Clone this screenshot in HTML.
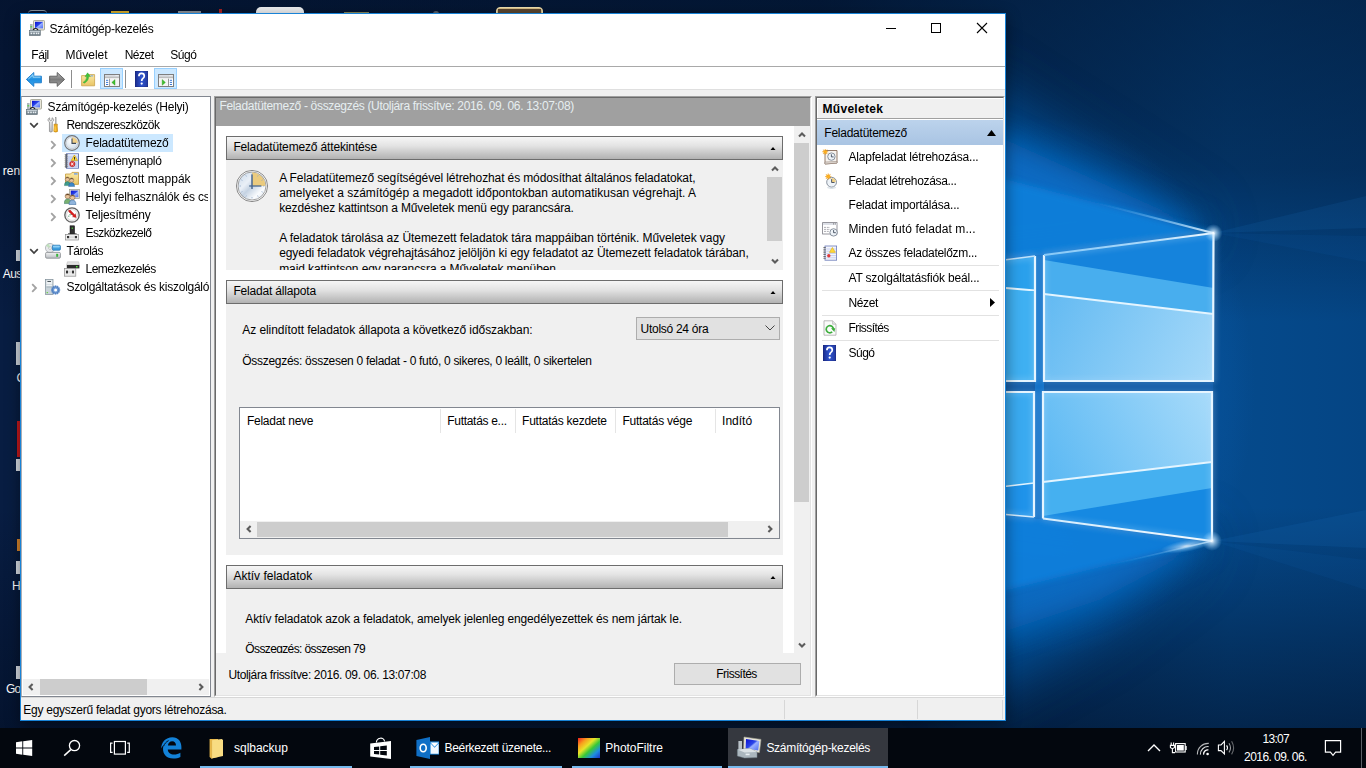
<!DOCTYPE html>
<html><head><meta charset="utf-8"><title>Számítógép-kezelés</title>
<style>
html,body{margin:0;padding:0;}
body{width:1366px;height:768px;overflow:hidden;position:relative;background:#04173a;font-family:"Liberation Sans",sans-serif;font-size:12px;color:#000;}
div,span.t,svg{position:absolute;}
span.t{white-space:nowrap;line-height:16px;height:16px;}
</style></head><body>
<svg id="wall" style="left:0;top:0" width="1366" height="768" viewBox="0 0 1366 768">
<defs>
<linearGradient id="bgx" x1="0" y1="0" x2="1366" y2="0" gradientUnits="userSpaceOnUse">
<stop offset="0" stop-color="#081d42"/><stop offset="0.6" stop-color="#05244c"/><stop offset="0.74" stop-color="#053a72"/><stop offset="0.9" stop-color="#054a8c"/><stop offset="1" stop-color="#054584"/>
</linearGradient>
<linearGradient id="bgy" x1="0" y1="0" x2="0" y2="768" gradientUnits="userSpaceOnUse">
<stop offset="0" stop-color="#020d22" stop-opacity="0.55"/><stop offset="0.22" stop-color="#020d22" stop-opacity="0.4"/><stop offset="0.42" stop-color="#020d22" stop-opacity="0"/><stop offset="0.66" stop-color="#020d22" stop-opacity="0"/><stop offset="0.85" stop-color="#020d22" stop-opacity="0.4"/><stop offset="1" stop-color="#020d22" stop-opacity="0.7"/>
</linearGradient>
<radialGradient id="glow" cx="0" cy="0" r="1" gradientUnits="userSpaceOnUse" gradientTransform="translate(1040 388) scale(215 270)">
<stop offset="0" stop-color="#1590ee" stop-opacity="1"/><stop offset="0.45" stop-color="#0f7bd8" stop-opacity="0.85"/><stop offset="0.75" stop-color="#0a62b8" stop-opacity="0.35"/><stop offset="1" stop-color="#0a5fb4" stop-opacity="0"/>
</radialGradient>
<radialGradient id="flare" cx="0.5" cy="0.5" r="0.5"><stop offset="0" stop-color="#fff" stop-opacity="1"/><stop offset="0.25" stop-color="#cfeaff" stop-opacity="0.7"/><stop offset="1" stop-color="#8fd0ff" stop-opacity="0"/></radialGradient>
<linearGradient id="paneTR" x1="1044" y1="300" x2="1213" y2="381" gradientUnits="userSpaceOnUse">
<stop offset="0" stop-color="#63baf2"/><stop offset="1" stop-color="#a6d9f9"/>
</linearGradient>
<linearGradient id="paneBR" x1="1044" y1="480" x2="1213" y2="392" gradientUnits="userSpaceOnUse">
<stop offset="0" stop-color="#5ab8f3"/><stop offset="1" stop-color="#a8dbfa"/>
</linearGradient>
<filter id="b6" x="-20%" y="-20%" width="140%" height="140%"><feGaussianBlur stdDeviation="6"/></filter>
<filter id="b14" x="-30%" y="-30%" width="160%" height="160%"><feGaussianBlur stdDeviation="14"/></filter>
<filter id="b30" x="-50%" y="-50%" width="200%" height="200%"><feGaussianBlur stdDeviation="28"/></filter>
<filter id="b3" x="-20%" y="-20%" width="140%" height="140%"><feGaussianBlur stdDeviation="3"/></filter>
<linearGradient id="beamL" x1="1213" y1="233" x2="1095" y2="202.5" gradientUnits="userSpaceOnUse"><stop offset="0" stop-color="#eaf6ff" stop-opacity="0.95"/><stop offset="0.4" stop-color="#9ad2fa" stop-opacity="0.6"/><stop offset="1" stop-color="#4aa8f0" stop-opacity="0"/></linearGradient>
<linearGradient id="beamL2" x1="1212" y1="541" x2="1110" y2="565" gradientUnits="userSpaceOnUse"><stop offset="0" stop-color="#eaf6ff" stop-opacity="0.8"/><stop offset="0.4" stop-color="#9ad2fa" stop-opacity="0.35"/><stop offset="1" stop-color="#4aa8f0" stop-opacity="0"/></linearGradient>
<linearGradient id="edgeT" x1="1044" y1="255" x2="1214" y2="233" gradientUnits="userSpaceOnUse"><stop offset="0" stop-color="#7cc4f6"/><stop offset="0.6" stop-color="#a8d8fa"/><stop offset="1" stop-color="#ffffff"/></linearGradient>
<linearGradient id="edgeB" x1="1043" y1="518" x2="1212" y2="541" gradientUnits="userSpaceOnUse"><stop offset="0" stop-color="#d8eefd"/><stop offset="1" stop-color="#ffffff"/></linearGradient>
<filter id="b1"><feGaussianBlur stdDeviation="0.7"/></filter>
</defs>
<rect width="1366" height="768" fill="url(#bgx)"/>
<rect width="1366" height="768" fill="url(#bgy)"/>
<rect x="700" y="0" width="666" height="768" fill="url(#glow)"/>
<!-- beams -->
<g filter="url(#b30)">
<polygon points="1213,233 960,70 960,270 1044,256" fill="#0a6cc8" opacity="0.55"/>
<polygon points="1212,541 1044,519 960,505 960,710 1100,630" fill="#0a6cc8" opacity="0.55"/>
</g>
<g filter="url(#b14)">
<polygon points="1213,233 980,128 980,262 1044,255" fill="#0b74d0" opacity="0.7"/>
<polygon points="1212,541 1044,518 980,508 980,640 1100,600" fill="#0b74d0" opacity="0.6"/>
</g>
<g filter="url(#b3)">
<polygon points="1213,233 990,175.5 990,262 1044,255" fill="#117ed9" opacity="0.95"/>
<polygon points="1212,541 1044,518 990,511 990,594 1100,567" fill="#1180dc" opacity="0.9"/>
</g>
<line x1="1213" y1="233" x2="1095" y2="202.5" stroke="url(#beamL)" stroke-width="2.2" filter="url(#b1)"/>
<line x1="1212" y1="541" x2="1110" y2="565" stroke="url(#beamL2)" stroke-width="1.6" filter="url(#b1)"/>
<!-- gaps background (darker blue behind panes) -->
<rect x="1000" y="381" width="213" height="12" fill="#0a56a4"/>
<rect x="1035" y="255" width="9" height="264" fill="#0d6ec6"/>
<!-- top-right pane -->
<polygon points="1044,255 1214,233 1213,381 1044,381" fill="#1583dc"/>
<polygon points="1044,260 1213.7,288 1213.5,314 1044,294" fill="#48aeee"/>
<polygon points="1044,294 1213.5,314 1213,381 1044,381" fill="url(#paneTR)"/>
<line x1="1044" y1="294" x2="1213.5" y2="314" stroke="#e4f5ff" stroke-width="2" filter="url(#b1)"/>
<!-- bottom-right pane -->
<polygon points="1043,392 1212,392 1212,541 1043,518.5" fill="#1689e2"/>
<polygon points="1043,392 1212,392 1212,462 1043,482" fill="url(#paneBR)"/>
<polygon points="1043,482 1212,462 1212,488 1043,516" fill="#45b0f0"/>
<line x1="1043" y1="482" x2="1212" y2="462" stroke="#e4f5ff" stroke-width="2" filter="url(#b1)"/>
<!-- left panes -->
<polygon points="1000,261 1035,256 1035,381 1000,381" fill="#2aa0ec"/>
<polygon points="1000,288 1035,291 1035,381 1000,381" fill="#3fb0f2"/>
<line x1="1000" y1="287.5" x2="1035" y2="290.5" stroke="#e4f5ff" stroke-width="2" filter="url(#b1)"/>
<polygon points="1000,392 1034,392 1034,517 1000,514" fill="#3aaaf0"/>
<polygon points="1000,487 1034,483 1034,517 1000,514" fill="#1f93ea"/>
<line x1="1000" y1="487" x2="1034" y2="483" stroke="#e4f5ff" stroke-width="1.6" filter="url(#b1)"/>
<!-- pane bright edges -->
<g fill="none" stroke="#eef8ff" stroke-width="2.2" filter="url(#b1)">
<polyline points="1213.5,233 1213,381 1044,381 1044,255"/>
<polyline points="1043,518.5 1043,392 1212,392 1212,541"/>
<polyline points="1000,381 1035,381 1035,256"/>
<polyline points="1000,392 1034,392 1034,517"/>
<line x1="1044" y1="255" x2="1214" y2="233" stroke="url(#edgeT)" stroke-width="1.8"/>
<line x1="1043" y1="518.5" x2="1212" y2="541" stroke="url(#edgeB)" stroke-width="1.8"/>
<line x1="1000" y1="260.5" x2="1035" y2="256" stroke="#bfe2fb" stroke-width="1.4"/>
<line x1="1000" y1="514" x2="1034" y2="517" stroke="#d8eefd" stroke-width="1.6"/>
</g>
<!-- rays -->
<polygon points="1213,233 1366,196 1366,228" fill="#2a8ee6" opacity="0.10"/>
<polygon points="1213,233 1366,236 1366,262" fill="#2a8ee6" opacity="0.06"/>
<polygon points="1212,541 1366,510 1366,548" fill="#2a8ee6" opacity="0.10"/>
<polygon points="1212,541 1366,560 1366,590" fill="#2a8ee6" opacity="0.06"/>
<g fill="none" stroke="#bfe4ff" stroke-width="4" opacity="0.35" filter="url(#b3)">
<polygon points="1044,255 1214,233 1213,381 1044,381"/>
<polygon points="1043,392 1212,392 1212,541 1043,518.5"/>
<polyline points="1000,260.5 1035,256 1035,381 1000,381"/>
<polyline points="1000,392 1034,392 1034,517 1000,514"/>
</g>
<!-- corner flares -->
<circle cx="1213.5" cy="233" r="9" fill="url(#flare)"/>
<circle cx="1212" cy="541" r="10" fill="url(#flare)"/>
<ellipse cx="1186" cy="546" rx="26" ry="6" fill="url(#flare)" opacity="0.8" transform="rotate(-10 1186 546)"/>
</svg>

<span class="t" style="left:2.7px;top:162.5px;color:#fff;letter-spacing:0.052px;">ren</span>
<span class="t" style="left:2.7px;top:265.5px;color:#fff;letter-spacing:-0.562px;">Aus</span>
<span class="t" style="left:16.6px;top:369.5px;color:#fff;letter-spacing:-1.672px;">C</span>
<span class="t" style="left:12px;top:577.5px;color:#fff;letter-spacing:-0.172px;">Hi</span>
<span class="t" style="left:6px;top:681px;color:#fff;letter-spacing:-0.758px;">Go</span>
<div style="left:16px;top:250px;width:5px;height:11px;background:#d8dde4;"></div>
<div style="left:16px;top:342px;width:5px;height:23px;background:#cfd6de;"></div>
<div style="left:17px;top:421px;width:4px;height:36px;background:#c4181c;"></div>
<div style="left:16px;top:459px;width:5px;height:12px;background:#d8dde4;"></div>
<div style="left:17px;top:539px;width:4px;height:12px;background:#d8842a;"></div>
<div style="left:16px;top:561px;width:5px;height:13px;background:#d8dde4;"></div>
<div style="left:16px;top:666px;width:5px;height:13px;background:#d8dde4;"></div>
<div style="left:256px;top:7px;width:48px;height:8px;background:#eef0f2;border-radius:5px 5px 0 0;"></div>
<div style="left:496px;top:7px;width:47px;height:8px;background:#d8c088;border-radius:4px 4px 0 0;border:1px solid #f0e0b0;box-sizing:border-box;"></div>
<div style="left:498px;top:9px;width:43px;height:6px;background:#5a4630;"></div>
<div style="left:111px;top:11px;width:18px;height:3px;background:#d8ac2a;"></div>
<div style="left:178px;top:11px;width:23px;height:3px;background:#8a9098;"></div>
<div style="left:28px;top:10px;width:19px;height:4px;background:transparent;border-radius:9px 9px 0 0;border-top:1.5px solid #8a96a4;box-sizing:border-box;"></div>
<div style="left:344px;top:12px;width:25px;height:2px;background:#8a8a5a;"></div>
<div style="left:219px;top:9px;width:3px;height:5px;background:#a82020;"></div>
<div style="left:433px;top:11px;width:6px;height:3px;background:#5a6068;border-radius:3px 3px 0 0;"></div>
<div style="left:20px;top:13px;width:986px;height:708px;background:#fff;box-shadow:0 4px 14px rgba(0,0,0,.45);"></div>
<div style="left:20px;top:13px;width:986px;height:708px;background:transparent;box-sizing:border-box;border:1px solid #1883d7;"></div>
<span class="t" style="left:49.5px;top:20.5px;letter-spacing:-0.263px;">Számítógép-kezelés</span>
<span class="t" style="left:31.3px;top:46.5px;letter-spacing:-0.461px;">Fájl</span>
<span class="t" style="left:65.6px;top:46.5px;letter-spacing:-0.004px;">Művelet</span>
<span class="t" style="left:124.7px;top:46.5px;letter-spacing:-0.512px;">Nézet</span>
<span class="t" style="left:170.3px;top:46.5px;letter-spacing:-0.458px;">Súgó</span>
<div style="left:21px;top:66px;width:984px;height:1px;background:#a9a9a9;"></div>
<div style="left:21px;top:89px;width:984px;height:1px;background:#dfdfdf;"></div>
<div style="left:21px;top:90px;width:984px;height:630px;background:#f0f0f0;"></div>
<div style="left:0px;top:728px;width:1366px;height:40px;background:#03070e;"></div>
<div style="left:21px;top:96px;width:190px;height:601px;background:#fff;box-sizing:border-box;border:1px solid #828790;border-left-color:#a9adb5;"></div>
<div style="left:62px;top:134px;width:111px;height:18px;background:#cce8ff;"></div>
<span class="t" style="left:47.6px;top:99px;letter-spacing:-0.220px;">Számítógép-kezelés (Helyi)</span>
<span class="t" style="left:66.4px;top:117px;letter-spacing:-0.524px;">Rendszereszközök</span>
<span class="t" style="left:85.6px;top:135px;letter-spacing:-0.219px;">Feladatütemező</span>
<span class="t" style="left:85.6px;top:153px;letter-spacing:-0.283px;">Eseménynapló</span>
<span class="t" style="left:85.6px;top:171px;letter-spacing:0.017px;">Megosztott mappák</span>
<div style="left:85px;top:188px;width:123px;height:18px;overflow:hidden">
<span class="t" style="left:0.6px;top:1px;letter-spacing:-0.169px;">Helyi felhasználók és csop</span>
</div>
<span class="t" style="left:85.6px;top:207px;letter-spacing:-0.142px;">Teljesítmény</span>
<span class="t" style="left:85.6px;top:225px;letter-spacing:-0.648px;">Eszközkezelő</span>
<span class="t" style="left:66.4px;top:243px;letter-spacing:-0.474px;">Tárolás</span>
<span class="t" style="left:85.6px;top:261px;letter-spacing:-0.560px;">Lemezkezelés</span>
<div style="left:66px;top:278px;width:143px;height:18px;overflow:hidden">
<span class="t" style="left:0.4px;top:1px;letter-spacing:-0.260px;">Szolgáltatások és kiszolgáló</span>
</div>
<div style="left:23px;top:679px;width:186px;height:16px;background:#f0f0f0;"></div>
<div style="left:40px;top:679px;width:107px;height:16px;background:#cdcdcd;"></div>
<div style="left:214px;top:96px;width:598px;height:601px;background:#fff;box-sizing:border-box;border-top:1px solid #a0a0a0;border-left:1px solid #a0a0a0;border-right:1px solid #fff;border-bottom:1px solid #fff;"></div>
<div style="left:215px;top:97px;width:596px;height:599px;background:#fff;box-sizing:border-box;border-top:1px solid #696969;border-left:1px solid #696969;border-right:1px solid #e3e3e3;border-bottom:1px solid #e3e3e3;"></div>
<div style="left:216px;top:98px;width:594px;height:28px;background:#a0a0a0;"></div>
<span class="t" style="left:219.4px;top:97.5px;color:#e6eef0;letter-spacing:-0.323px;">Feladatütemező - összegzés (Utoljára frissítve: 2016. 09. 06. 13:07:08)</span>
<div style="left:216px;top:653px;width:594px;height:42px;background:#f0f0f0;"></div>
<div style="left:794px;top:126px;width:16px;height:527px;background:#f0f0f0;"></div>
<div style="left:794px;top:143px;width:15px;height:359px;background:#cdcdcd;"></div>
<div style="left:226px;top:136px;width:557px;height:24px;background:linear-gradient(#f6f6f6,#e3e3e3 40%,#b2b2b2);box-sizing:border-box;border:1px solid #6d6d6d;"></div>
<span class="t" style="left:233.4px;top:138.5px;letter-spacing:-0.147px;">Feladatütemező áttekintése</span>
<svg style="left:769.6px;top:146.8px" width="6" height="3.6" viewBox="0 0 6 3.6"><path d="M0 3.6 L3 0 L6 3.6Z" fill="#000"/></svg>
<div style="left:226px;top:160px;width:541px;height:110px;background:#f0f0f0;"></div>
<div style="left:767px;top:160px;width:16px;height:110px;background:#f0f0f0;"></div>
<div style="left:767px;top:177px;width:15px;height:64px;background:#cdcdcd;"></div>
<span class="t" style="left:279.2px;top:169.7px;letter-spacing:-0.121px;">A Feladatütemező segítségével létrehozhat és módosíthat általános feladatokat,</span>
<span class="t" style="left:279.2px;top:184.7px;letter-spacing:-0.002px;">amelyeket a számítógép a megadott időpontokban automatikusan végrehajt. A</span>
<span class="t" style="left:279.2px;top:199.7px;letter-spacing:-0.157px;">kezdéshez kattintson a Műveletek menü egy parancsára.</span>
<span class="t" style="left:279.2px;top:229.7px;letter-spacing:-0.062px;">A feladatok tárolása az Ütemezett feladatok tára mappáiban történik. Műveletek vagy</span>
<span class="t" style="left:279.2px;top:244.7px;letter-spacing:-0.083px;">egyedi feladatok végrehajtásához jelöljön ki egy feladatot az Ütemezett feladatok tárában,</span>
<div style="left:270px;top:260px;width:490px;height:10px;overflow:hidden">
<span class="t" style="left:9.199999999999989px;top:0.5px;letter-spacing:-0.097px;">majd kattintson egy parancsra a Műveletek menüben.</span>
</div>
<div style="left:226px;top:280px;width:557px;height:24px;background:linear-gradient(#f6f6f6,#e3e3e3 40%,#b2b2b2);box-sizing:border-box;border:1px solid #6d6d6d;"></div>
<span class="t" style="left:233.4px;top:282.5px;letter-spacing:-0.175px;">Feladat állapota</span>
<svg style="left:769.6px;top:290.8px" width="6" height="3.6" viewBox="0 0 6 3.6"><path d="M0 3.6 L3 0 L6 3.6Z" fill="#000"/></svg>
<div style="left:226px;top:304px;width:557px;height:251px;background:#f0f0f0;"></div>
<span class="t" style="left:242.3px;top:322.4px;letter-spacing:-0.083px;">Az elindított feladatok állapota a következő időszakban:</span>
<span class="t" style="left:242.3px;top:353.1px;letter-spacing:-0.294px;">Összegzés: összesen 0 feladat - 0 futó, 0 sikeres, 0 leállt, 0 sikertelen</span>
<div style="left:636px;top:317px;width:144px;height:23px;background:#e1e1e1;box-sizing:border-box;border:1px solid #adadad;"></div>
<span class="t" style="left:640.6px;top:321.4px;letter-spacing:-0.283px;">Utolsó 24 óra</span>
<svg style="left:765px;top:325px" width="10" height="6" viewBox="0 0 10 6"><path d="M0.5 0.5 L5 5 L9.5 0.5" fill="none" stroke="#444" stroke-width="1"/></svg>
<div style="left:239px;top:407px;width:541px;height:132px;background:#fff;box-sizing:border-box;border:1px solid #828790;"></div>
<span class="t" style="left:247px;top:413px;letter-spacing:-0.266px;">Feladat neve</span>
<span class="t" style="left:447.3px;top:413px;letter-spacing:-0.306px;">Futtatás e...</span>
<span class="t" style="left:522.1px;top:413px;letter-spacing:-0.251px;">Futtatás kezdete</span>
<span class="t" style="left:622.4px;top:413px;letter-spacing:-0.225px;">Futtatás vége</span>
<span class="t" style="left:722.1px;top:413px;letter-spacing:-0.005px;">Indító</span>
<div style="left:440px;top:409px;width:1px;height:24px;background:#e5e5e5;"></div>
<div style="left:515px;top:409px;width:1px;height:24px;background:#e5e5e5;"></div>
<div style="left:615px;top:409px;width:1px;height:24px;background:#e5e5e5;"></div>
<div style="left:715px;top:409px;width:1px;height:24px;background:#e5e5e5;"></div>
<div style="left:240px;top:521px;width:539px;height:17px;background:#f0f0f0;"></div>
<div style="left:257px;top:522px;width:471px;height:15px;background:#cdcdcd;"></div>
<div style="left:226px;top:565px;width:557px;height:24px;background:linear-gradient(#f6f6f6,#e3e3e3 40%,#b2b2b2);box-sizing:border-box;border:1px solid #6d6d6d;"></div>
<span class="t" style="left:233.4px;top:567.5px;letter-spacing:0.005px;">Aktív feladatok</span>
<svg style="left:769.6px;top:575.8px" width="6" height="3.6" viewBox="0 0 6 3.6"><path d="M0 3.6 L3 0 L6 3.6Z" fill="#000"/></svg>
<div style="left:226px;top:589px;width:557px;height:64px;background:#f0f0f0;"></div>
<span class="t" style="left:245.3px;top:611.4px;letter-spacing:-0.131px;">Aktív feladatok azok a feladatok, amelyek jelenleg engedélyezettek és nem jártak le.</span>
<div style="left:240px;top:640px;width:200px;height:13px;overflow:hidden">
<span class="t" style="left:5.3px;top:1px;letter-spacing:-0.623px;">Összegzés: összesen 79</span>
</div>
<span class="t" style="left:228.4px;top:667px;letter-spacing:-0.362px;">Utoljára frissítve: 2016. 09. 06. 13:07:08</span>
<div style="left:674px;top:663px;width:127px;height:22px;background:#e1e1e1;box-sizing:border-box;border:1px solid #adadad;"></div>
<span class="t" style="left:716.25px;top:666px;letter-spacing:-0.527px;">Frissítés</span>
<div style="left:815px;top:96px;width:190px;height:601px;background:#fff;box-sizing:border-box;border-top:1px solid #a0a0a0;border-left:1px solid #a0a0a0;border-right:1px solid #fff;border-bottom:1px solid #fff;"></div>
<div style="left:816px;top:97px;width:188px;height:599px;background:#fff;box-sizing:border-box;border-top:1px solid #696969;border-left:1px solid #696969;border-right:1px solid #e3e3e3;border-bottom:1px solid #e3e3e3;"></div>
<div style="left:817px;top:98px;width:186px;height:20px;background:#f0f0f0;box-sizing:border-box;border-top:1px solid #fff;border-left:1px solid #fff;"></div>
<div style="left:817px;top:118px;width:186px;height:1px;background:#a0a0a0;"></div>
<span class="t" style="left:822.5px;top:101px;font-weight:bold;letter-spacing:0.297px;">Műveletek</span>
<div style="left:817px;top:120px;width:186px;height:25px;background:linear-gradient(#bcd3ec,#a9c4e3);"></div>
<span class="t" style="left:824.3px;top:124.6px;letter-spacing:-0.240px;">Feladatütemező</span>
<svg style="left:987px;top:130px" width="9" height="6" viewBox="0 0 9 6"><path d="M0 6 L4.5 0 L9 6Z" fill="#000"/></svg>
<span class="t" style="left:848.5px;top:149px;letter-spacing:-0.212px;">Alapfeladat létrehozása...</span>
<span class="t" style="left:848.5px;top:173px;letter-spacing:-0.337px;">Feladat létrehozása...</span>
<span class="t" style="left:848.5px;top:197px;letter-spacing:-0.204px;">Feladat importálása...</span>
<span class="t" style="left:848.5px;top:221px;letter-spacing:0.071px;">Minden futó feladat m...</span>
<span class="t" style="left:848.5px;top:245px;letter-spacing:-0.302px;">Az összes feladatelőzm...</span>
<span class="t" style="left:848.5px;top:270px;letter-spacing:-0.172px;">AT szolgáltatásfiók beál...</span>
<span class="t" style="left:848.5px;top:295px;letter-spacing:-0.372px;">Nézet</span>
<span class="t" style="left:848.5px;top:320px;letter-spacing:-0.572px;">Frissítés</span>
<span class="t" style="left:848.5px;top:345px;letter-spacing:-0.508px;">Súgó</span>
<div style="left:822px;top:265px;width:177px;height:1px;background:#e2e2e2;"></div>
<div style="left:822px;top:290px;width:177px;height:1px;background:#e2e2e2;"></div>
<div style="left:822px;top:315px;width:177px;height:1px;background:#e2e2e2;"></div>
<div style="left:822px;top:340px;width:177px;height:1px;background:#e2e2e2;"></div>
<svg style="left:990px;top:298px" width="5" height="9" viewBox="0 0 5 9"><path d="M0 0 L5 4.5 L0 9Z" fill="#000"/></svg>
<div style="left:21px;top:697px;width:984px;height:1px;background:#d7d7d7;"></div>
<div style="left:21px;top:698px;width:984px;height:22px;background:#f0f0f0;"></div>
<span class="t" style="left:23.3px;top:702px;letter-spacing:-0.260px;">Egy egyszerű feladat gyors létrehozása.</span>
<div style="left:784px;top:700px;width:1px;height:19px;background:#d7d7d7;"></div>
<div style="left:917px;top:700px;width:1px;height:19px;background:#d7d7d7;"></div>
<div style="left:1002px;top:700px;width:1px;height:19px;background:#d7d7d7;"></div>
<div style="left:728px;top:728px;width:160px;height:40px;background:#35383f;"></div>
<div style="left:200px;top:766px;width:152px;height:2px;background:#76b9ed;"></div>
<div style="left:410px;top:766px;width:152px;height:2px;background:#76b9ed;"></div>
<div style="left:572px;top:766px;width:150px;height:2px;background:#76b9ed;"></div>
<div style="left:728px;top:766px;width:160px;height:2px;background:#76b9ed;"></div>
<span class="t" style="left:234px;top:740px;color:#fff;letter-spacing:-0.016px;">sqlbackup</span>
<span class="t" style="left:444.5px;top:740px;color:#fff;letter-spacing:-0.324px;">Beérkezett üzenete...</span>
<span class="t" style="left:605.3px;top:740px;color:#fff;letter-spacing:-0.030px;">PhotoFiltre</span>
<span class="t" style="left:766.4px;top:740px;color:#fff;letter-spacing:-0.280px;">Számítógép-kezelés</span>
<span class="t" style="left:1262.6px;top:731px;color:#fff;letter-spacing:-0.746px;">13:07</span>
<span class="t" style="left:1244.1px;top:748.6px;color:#fff;letter-spacing:-0.566px;">2016. 09. 06.</span>
<svg width="0" height="0" style="left:0;top:0"><defs>
<linearGradient id="gScreen" x1="0" y1="0" x2="1" y2="1"><stop offset="0" stop-color="#0a0fd0"/><stop offset="0.45" stop-color="#2a45e8"/><stop offset="0.55" stop-color="#9ab0ff"/><stop offset="1" stop-color="#4a6af0"/></linearGradient>
<linearGradient id="gMetal" x1="0" y1="0" x2="0" y2="1"><stop offset="0" stop-color="#f4f4f4"/><stop offset="1" stop-color="#b9bdc2"/></linearGradient>
<linearGradient id="gBox" x1="0" y1="0" x2="0" y2="1"><stop offset="0" stop-color="#9aa7b0"/><stop offset="1" stop-color="#66757f"/></linearGradient>
<radialGradient id="gClock" cx="0.4" cy="0.35" r="0.7"><stop offset="0" stop-color="#ffffff"/><stop offset="1" stop-color="#cfdce8"/></radialGradient>
<linearGradient id="gFolder" x1="0" y1="0" x2="0" y2="1"><stop offset="0" stop-color="#fbe9a4"/><stop offset="1" stop-color="#e9c565"/></linearGradient>
<linearGradient id="gHelp" x1="0" y1="0" x2="1" y2="0"><stop offset="0" stop-color="#1a2a8a"/><stop offset="0.5" stop-color="#2f55d0"/><stop offset="1" stop-color="#22389c"/></linearGradient>
<linearGradient id="gBack" x1="0" y1="0" x2="0" y2="1"><stop offset="0" stop-color="#6cc4f6"/><stop offset="0.5" stop-color="#1f8fe0"/><stop offset="1" stop-color="#3aa6ee"/></linearGradient>
<linearGradient id="gFwd" x1="0" y1="0" x2="0" y2="1"><stop offset="0" stop-color="#b9b9b9"/><stop offset="0.5" stop-color="#7c7c7c"/><stop offset="1" stop-color="#a2a2a2"/></linearGradient>
</defs></svg>
<svg style="left:26px;top:99px" width="16" height="16" viewBox="0 0 16 16" ><rect x="4.5" y="0.5" width="11" height="9.5" rx="0.8" fill="#e8e6d8" stroke="#9a9a8c" stroke-width="0.8"/><rect x="6" y="1.8" width="8" height="6.6" fill="url(#gScreen)"/><rect x="1" y="4" width="2.6" height="6" fill="#aeb6bc"/><rect x="1.4" y="6.2" width="1.8" height="1.2" fill="#4fd23c"/><path d="M4 10 Q6.5 7.5 9 10" fill="none" stroke="#222" stroke-width="1.4"/><rect x="5.6" y="9.2" width="2" height="1" fill="#fff"/><rect x="0.3" y="10.3" width="11" height="5.2" fill="url(#gBox)" stroke="#5d6b75" stroke-width="0.6"/><rect x="0.8" y="11" width="10" height="0.9" fill="#c8d2d8"/><rect x="1.6" y="12.6" width="1.6" height="1.6" fill="#e8eef2"/><rect x="4.2" y="12.6" width="1.6" height="1.6" fill="#e8eef2"/><rect x="6.8" y="12.6" width="1.6" height="1.6" fill="#e8eef2"/><rect x="9" y="12.6" width="1.2" height="1.6" fill="#e8eef2"/></svg>
<svg style="left:45px;top:117px" width="16" height="16" viewBox="0 0 16 16" ><path transform="translate(0.9 0) scale(1.18 1)" d="M3.2 0.8 C1.8 1.4 1.4 3 2.2 4.2 L3 5 L3 14.5 Q4.2 15.6 5.4 14.5 L5.4 5 L6.2 4.2 C7 3 6.6 1.4 5.2 0.8 L5.2 3 L4.2 3.6 L3.2 3Z" fill="url(#gMetal)" stroke="#8a8a8a" stroke-width="0.7"/><rect x="10.2" y="0.6" width="1" height="7" fill="#b0b0b0" stroke="#888" stroke-width="0.3"/><path d="M9 7.2 L12.4 7.2 L12.2 9 L12.6 14.4 Q10.7 15.8 8.8 14.4 L9.2 9Z" fill="#f2b01e" stroke="#b87a08" stroke-width="0.6"/><rect x="9.6" y="9.4" width="0.9" height="4.6" fill="#ffd866"/></svg>
<svg style="left:64px;top:135px" width="16" height="16" viewBox="0 0 16 16" ><circle cx="8" cy="8" r="7.3" fill="#e9eef3" stroke="#6f7276" stroke-width="1.2"/><circle cx="8" cy="8" r="5.9" fill="url(#gClock)" stroke="#b7bec6" stroke-width="0.6"/><path d="M8 8 L8 2.3 A5.7 5.7 0 0 1 13.7 8Z" fill="#f0cf86"/><path d="M8 3.6 L8 8.4 L12 8.4" fill="none" stroke="#3e4a5a" stroke-width="1.1"/></svg>
<svg style="left:64px;top:153px" width="16" height="16" viewBox="0 0 16 16" ><rect x="2.5" y="0.8" width="12" height="14.4" fill="#e9eefb" stroke="#5b6fb0" stroke-width="0.9"/><rect x="3" y="1.3" width="11" height="13.4" fill="#dfe6fa"/><g stroke="#9fb0e4" stroke-width="0.7"><line x1="4" y1="4" x2="13.6" y2="4"/><line x1="4" y1="6" x2="13.6" y2="6"/><line x1="4" y1="8" x2="13.6" y2="8"/><line x1="4" y1="10" x2="13.6" y2="10"/><line x1="4" y1="12" x2="13.6" y2="12"/><line x1="4" y1="13.8" x2="13.6" y2="13.8"/></g><g fill="#666" stroke="#444" stroke-width="0.3"><rect x="1" y="1.6" width="2.6" height="0.9"/><rect x="1" y="3.6" width="2.6" height="0.9"/><rect x="1" y="5.6" width="2.6" height="0.9"/><rect x="1" y="7.6" width="2.6" height="0.9"/><rect x="1" y="9.6" width="2.6" height="0.9"/><rect x="1" y="11.6" width="2.6" height="0.9"/><rect x="1" y="13.4" width="2.6" height="0.9"/></g><path d="M10.4 2 L13.6 7.6 L7.2 7.6Z" fill="#ffd83a" stroke="#c69a00" stroke-width="0.6"/><rect x="10" y="4" width="0.9" height="2" fill="#222"/><rect x="10" y="6.4" width="0.9" height="0.7" fill="#222"/><circle cx="8.3" cy="11" r="2.7" fill="#e03a3a" stroke="#a81818" stroke-width="0.5"/><path d="M7.1 9.8 L9.5 12.2 M9.5 9.8 L7.1 12.2" stroke="#fff" stroke-width="1"/></svg>
<svg style="left:64px;top:171px" width="16" height="16" viewBox="0 0 16 16" ><path d="M1.5 3 L6.5 3 L8 1.4 L14.5 1.4 L14.5 13.4 L1.5 13.4Z" fill="url(#gFolder)" stroke="#c49a3c" stroke-width="0.8"/><rect x="10" y="2.2" width="3.6" height="1.4" fill="#6fa0e8"/><g transform="translate(0.4 5.6) scale(1.0)"><circle cx="3" cy="2.6" r="2.2" fill="#e8c39a" stroke="#6b4a2a" stroke-width="0.4"/><path d="M0 9 Q0 5 3 5 Q6 5 6 9Z" fill="#3f9c8c" stroke="#2a6a5c" stroke-width="0.4"/><path d="M1 2 Q3 -0.6 5 2 Q3 1 1 2Z" fill="#5a3a1c"/><circle cx="7.2" cy="3.6" r="2.2" fill="#e8c39a" stroke="#6b4a2a" stroke-width="0.4"/><path d="M4.2 10 Q4.2 6 7.2 6 Q10.2 6 10.2 10Z" fill="#3d86c6" stroke="#2a5a8c" stroke-width="0.4"/><path d="M5.2 3 Q7.2 0.4 9.2 3 Q7.2 2 5.2 3Z" fill="#3a2a1a"/></g></svg>
<svg style="left:64px;top:189px" width="16" height="16" viewBox="0 0 16 16" ><rect x="5.5" y="0.5" width="10" height="9" fill="#e4e2d4" stroke="#9a9a8c" stroke-width="0.7"/><rect x="6.8" y="1.6" width="7.6" height="6.6" fill="url(#gScreen)"/><g transform="translate(0.2 4.2) scale(1.15)"><circle cx="3" cy="2.6" r="2.2" fill="#e8c39a" stroke="#6b4a2a" stroke-width="0.4"/><path d="M0 9 Q0 5 3 5 Q6 5 6 9Z" fill="#78b070" stroke="#2a6a5c" stroke-width="0.4"/><path d="M1 2 Q3 -0.6 5 2 Q3 1 1 2Z" fill="#5a3a1c"/><circle cx="7.2" cy="3.6" r="2.2" fill="#e8c39a" stroke="#6b4a2a" stroke-width="0.4"/><path d="M4.2 10 Q4.2 6 7.2 6 Q10.2 6 10.2 10Z" fill="#8fb4dc" stroke="#2a5a8c" stroke-width="0.4"/><path d="M5.2 3 Q7.2 0.4 9.2 3 Q7.2 2 5.2 3Z" fill="#3a2a1a"/></g></svg>
<svg style="left:64px;top:207px" width="16" height="16" viewBox="0 0 16 16" ><circle cx="8" cy="8" r="7.2" fill="#f4f4f4" stroke="#5e5e5e" stroke-width="1.3"/><circle cx="8" cy="8" r="5.4" fill="#fff" stroke="#c8c8c8" stroke-width="0.6"/><path d="M4.6 9.6 A3.8 3.8 0 0 1 11.6 9.6" fill="none" stroke="#3a8c5a" stroke-width="1.1" stroke-dasharray="1 0.8"/><path d="M4.4 3.6 L6.2 3 L11 8 L11.4 6.6 L12.2 10.6 L8.4 9.8 L9.6 9.2 L5 5Z" fill="#d81e1e" stroke="#a00" stroke-width="0.3"/></svg>
<svg style="left:64px;top:225px" width="16" height="16" viewBox="0 0 16 16" ><rect x="6" y="0.8" width="4.6" height="8" fill="#2e2e2e" stroke="#111" stroke-width="0.5"/><rect x="7.7" y="2.6" width="1.2" height="1.2" fill="#4fe23c"/><path d="M4 8.8 L12.6 8.8" stroke="#222" stroke-width="0.8"/><rect x="1.6" y="9.4" width="12.8" height="5.6" fill="#eeeeee" stroke="#8c8c8c" stroke-width="0.7"/><rect x="3" y="11" width="2.2" height="2.2" fill="#333"/><rect x="10.8" y="11" width="2.2" height="2.2" fill="#333"/><rect x="5.2" y="11.6" width="5.6" height="1" fill="#d0d0d0"/></svg>
<svg style="left:45px;top:243px" width="16" height="16" viewBox="0 0 16 16" ><circle cx="5" cy="5" r="4.6" fill="#e6e8ea" stroke="#a2a6aa" stroke-width="0.7"/><circle cx="5" cy="5" r="1.4" fill="#fff" stroke="#999" stroke-width="0.5"/><path d="M5 5 L1 3 A4.4 4.4 0 0 1 4 0.8Z" fill="#b6e0b0" opacity="0.8"/><rect x="7.4" y="2.2" width="8" height="5" rx="1" fill="#3f9ede" stroke="#1f6eae" stroke-width="0.7"/><rect x="8" y="2.8" width="6.8" height="1.6" rx="0.6" fill="#8fd0f6"/><rect x="0.6" y="9.4" width="14.8" height="5.8" rx="1.2" fill="url(#gMetal)" stroke="#85898d" stroke-width="0.8"/><rect x="11.4" y="11" width="1.6" height="2.6" fill="#38c83a" stroke="#1f8a22" stroke-width="0.3"/></svg>
<svg style="left:64px;top:261px" width="16" height="16" viewBox="0 0 16 16" ><path d="M3.4 0.8 L14.6 0.8 L15.4 4 L2.6 4Z" fill="#e3e3e3" stroke="#aaa" stroke-width="0.4"/><rect x="2.8" y="4" width="12.6" height="3.4" fill="#2c2c2c"/><rect x="12" y="5" width="1.6" height="1.4" fill="#4fe23c"/><rect x="0.6" y="7.6" width="11.2" height="7.6" fill="#e9e9e9" stroke="#8c8c8c" stroke-width="0.7"/><rect x="2" y="9.6" width="2" height="2.8" fill="#333"/><rect x="8" y="9.6" width="2" height="2.8" fill="#333"/><rect x="4" y="10.4" width="4" height="1.2" fill="#d4d4d4"/></svg>
<svg style="left:45px;top:279px" width="16" height="16" viewBox="0 0 16 16" ><rect x="0.6" y="0.6" width="7.4" height="14.8" fill="#c9d3d9" stroke="#7d8c96" stroke-width="0.7"/><rect x="1.4" y="1.4" width="5.8" height="3.6" fill="#eef2f4"/><rect x="2.4" y="2" width="3.6" height="0.9" fill="#3c464c"/><rect x="1.4" y="5.6" width="5.8" height="1.4" fill="#eef2f4"/><rect x="1.4" y="7.6" width="5.8" height="1" fill="#aab7bf"/><rect x="1.6" y="13" width="1.4" height="1.2" fill="#6fd24c"/><g transform="translate(10.6 11)"><rect x="-0.8" y="-4.6" width="1.6" height="9.2" fill="#5c8ccc" transform="rotate(0)"/><rect x="-0.8" y="-4.6" width="1.6" height="9.2" fill="#5c8ccc" transform="rotate(30)"/><rect x="-0.8" y="-4.6" width="1.6" height="9.2" fill="#5c8ccc" transform="rotate(60)"/><rect x="-0.8" y="-4.6" width="1.6" height="9.2" fill="#5c8ccc" transform="rotate(90)"/><rect x="-0.8" y="-4.6" width="1.6" height="9.2" fill="#5c8ccc" transform="rotate(120)"/><rect x="-0.8" y="-4.6" width="1.6" height="9.2" fill="#5c8ccc" transform="rotate(150)"/><circle r="3.3" fill="#6c9ad6" stroke="#3e6aa8" stroke-width="0.5"/><circle r="1.5" fill="#fff"/></g></svg>
<svg style="left:28.5px;top:122.4px" width="10" height="7" viewBox="0 0 10 7" ><path d="M1.2 1.2 L5 5 L8.8 1.2" fill="none" stroke="#404040" stroke-width="1.7"/></svg>
<svg style="left:28.5px;top:248.2px" width="10" height="7" viewBox="0 0 10 7" ><path d="M1.2 1.2 L5 5 L8.8 1.2" fill="none" stroke="#404040" stroke-width="1.7"/></svg>
<svg style="left:49.9px;top:139.5px" width="7" height="10" viewBox="0 0 7 10" ><path d="M1.2 1.2 L5 5 L1.2 8.8" fill="none" stroke="#a2a2a2" stroke-width="1.8"/></svg>
<svg style="left:49.9px;top:157.5px" width="7" height="10" viewBox="0 0 7 10" ><path d="M1.2 1.2 L5 5 L1.2 8.8" fill="none" stroke="#a2a2a2" stroke-width="1.8"/></svg>
<svg style="left:49.9px;top:175.5px" width="7" height="10" viewBox="0 0 7 10" ><path d="M1.2 1.2 L5 5 L1.2 8.8" fill="none" stroke="#a2a2a2" stroke-width="1.8"/></svg>
<svg style="left:49.9px;top:193.5px" width="7" height="10" viewBox="0 0 7 10" ><path d="M1.2 1.2 L5 5 L1.2 8.8" fill="none" stroke="#a2a2a2" stroke-width="1.8"/></svg>
<svg style="left:49.9px;top:211.5px" width="7" height="10" viewBox="0 0 7 10" ><path d="M1.2 1.2 L5 5 L1.2 8.8" fill="none" stroke="#a2a2a2" stroke-width="1.8"/></svg>
<svg style="left:30.9px;top:283.4px" width="7" height="10" viewBox="0 0 7 10" ><path d="M1.2 1.2 L5 5 L1.2 8.8" fill="none" stroke="#a2a2a2" stroke-width="1.8"/></svg>
<svg style="left:29px;top:20px" width="16" height="16" viewBox="0 0 16 16" ><rect x="4.5" y="0.5" width="11" height="9.5" rx="0.8" fill="#e8e6d8" stroke="#9a9a8c" stroke-width="0.8"/><rect x="6" y="1.8" width="8" height="6.6" fill="url(#gScreen)"/><rect x="1" y="4" width="2.6" height="6" fill="#aeb6bc"/><rect x="1.4" y="6.2" width="1.8" height="1.2" fill="#4fd23c"/><path d="M4 10 Q6.5 7.5 9 10" fill="none" stroke="#222" stroke-width="1.4"/><rect x="5.6" y="9.2" width="2" height="1" fill="#fff"/><rect x="0.3" y="10.3" width="11" height="5.2" fill="url(#gBox)" stroke="#5d6b75" stroke-width="0.6"/><rect x="0.8" y="11" width="10" height="0.9" fill="#c8d2d8"/><rect x="1.6" y="12.6" width="1.6" height="1.6" fill="#e8eef2"/><rect x="4.2" y="12.6" width="1.6" height="1.6" fill="#e8eef2"/><rect x="6.8" y="12.6" width="1.6" height="1.6" fill="#e8eef2"/><rect x="9" y="12.6" width="1.2" height="1.6" fill="#e8eef2"/></svg>
<svg style="left:880px;top:18px" width="120" height="20" viewBox="880 18 120 20"><g stroke="#000" stroke-width="1" fill="none" shape-rendering="crispEdges"><line x1="886" y1="28.5" x2="896" y2="28.5"/><rect x="931.5" y="23.5" width="9" height="9"/></g><path d="M977 23 L987 33 M987 23 L977 33" stroke="#000" stroke-width="1.1" fill="none"/></svg>
<svg style="left:822px;top:149px" width="16" height="16" viewBox="0 0 16 16" ><path d="M3 1.5 L15 1.5 L15 14 L3 15Z" fill="#f7f3ef" stroke="#7a5a48" stroke-width="0.8"/><path d="M3 13 L15 12.4 L15 14 L3 15Z" fill="#e2dbd4" stroke="#8a7a70" stroke-width="0.5"/><circle cx="9.4" cy="7.6" r="3.7" fill="#eef3f8" stroke="#7d8794" stroke-width="0.9"/><path d="M9.4 5.305999999999999 L9.4 7.8999999999999995 L11.620000000000001 7.8999999999999995" fill="none" stroke="#3e4a5a" stroke-width="0.9"/><polygon points="3.20,-0.20 3.68,1.64 5.32,0.68 4.36,2.32 6.20,2.80 4.36,3.28 5.32,4.92 3.68,3.96 3.20,5.80 2.72,3.96 1.08,4.92 2.04,3.28 0.20,2.80 2.04,2.32 1.08,0.68 2.72,1.64" fill="#ffb21e" stroke="#e88a00" stroke-width="0.3"/></svg>
<svg style="left:823px;top:172.5px" width="16" height="16" viewBox="0 0 16 16" ><circle cx="8.6" cy="9.2" r="4.9" fill="#eef3f8" stroke="#7d8794" stroke-width="0.9"/><path d="M8.6 9.2 L8.6 5.099999999999999 A4.1000000000000005 4.1000000000000005 0 0 1 12.7 9.2Z" fill="#f0cf86"/><path d="M8.6 6.161999999999999 L8.6 9.5 L11.54 9.5" fill="none" stroke="#3e4a5a" stroke-width="0.9"/><path d="M4.4 14.6 Q8.6 16.4 12.8 14.6" stroke="#c4d0dc" stroke-width="0.8" fill="none"/><polygon points="5.20,0.40 5.71,2.36 7.46,1.34 6.44,3.09 8.40,3.60 6.44,4.11 7.46,5.86 5.71,4.84 5.20,6.80 4.69,4.84 2.94,5.86 3.96,4.11 2.00,3.60 3.96,3.09 2.94,1.34 4.69,2.36" fill="#ffb21e" stroke="#e88a00" stroke-width="0.3"/></svg>
<svg style="left:822px;top:221px" width="16" height="16" viewBox="0 0 16 16" ><rect x="0.6" y="1.6" width="14.4" height="11.4" fill="#fff" stroke="#7c7c84" stroke-width="0.8"/><rect x="1" y="2" width="13.6" height="2" fill="#dcdfe6"/><rect x="11" y="2.4" width="1" height="1" fill="#777"/><rect x="12.8" y="2.4" width="1" height="1" fill="#777"/><g stroke="#9a9aa2" stroke-width="0.8" stroke-dasharray="2 0.8"><line x1="2" y1="6.4" x2="8" y2="6.4"/><line x1="2" y1="8.4" x2="8" y2="8.4"/><line x1="2" y1="10.4" x2="7" y2="10.4"/></g><circle cx="11.6" cy="11.4" r="3.7" fill="#eef3f8" stroke="#7d8794" stroke-width="0.9"/><path d="M11.6 9.106 L11.6 11.700000000000001 L13.82 11.700000000000001" fill="none" stroke="#3e4a5a" stroke-width="0.9"/></svg>
<svg style="left:822px;top:245px" width="16" height="16" viewBox="0 0 16 16" ><rect x="3" y="1" width="11.6" height="14.2" fill="#f4f6fd" stroke="#6a7ab8" stroke-width="0.8"/><g stroke="#b4c0ea" stroke-width="0.7"><line x1="4.4" y1="4" x2="14" y2="4"/><line x1="4.4" y1="6.2" x2="14" y2="6.2"/><line x1="4.4" y1="8.4" x2="14" y2="8.4"/><line x1="4.4" y1="10.6" x2="14" y2="10.6"/><line x1="4.4" y1="12.8" x2="14" y2="12.8"/></g><g fill="#555"><rect x="1.4" y="2" width="2.4" height="0.8"/><rect x="1.4" y="3.8" width="2.4" height="0.8"/><rect x="1.4" y="5.6" width="2.4" height="0.8"/><rect x="1.4" y="7.4" width="2.4" height="0.8"/><rect x="1.4" y="9.2" width="2.4" height="0.8"/><rect x="1.4" y="11" width="2.4" height="0.8"/><rect x="1.4" y="12.8" width="2.4" height="0.8"/></g><path d="M10.4 2.4 L13.4 7.4 L7.4 7.4Z" fill="#ffd83a" stroke="#d4a400" stroke-width="0.5"/><circle cx="6.8" cy="10.8" r="1.7" fill="#e03a3a"/></svg>
<svg style="left:822px;top:320px" width="16" height="16" viewBox="0 0 16 16" ><path d="M2 0.8 L10.6 0.8 L14 4.2 L14 15.2 L2 15.2Z" fill="#fbfbfb" stroke="#a9a9a9" stroke-width="0.8"/><path d="M10.6 0.8 L10.6 4.2 L14 4.2" fill="#e6e6e6" stroke="#a9a9a9" stroke-width="0.6"/><path d="M11.4 9.2 A3.6 3.6 0 1 0 10.2 11.9" fill="none" stroke="#3cae3c" stroke-width="1.7"/><path d="M9 8.2 L13.2 8.2 L12.4 12Z" fill="#3cae3c"/></svg>
<svg style="left:823px;top:345px" width="13" height="16" viewBox="0 0 13 16" ><rect x="0" y="0" width="13" height="16" fill="url(#gHelp)" stroke="#1a2470" stroke-width="0.6"/><path d="M3.9 5.2 Q3.9 2.4 6.5 2.4 Q9.3 2.4 9.3 5 Q9.3 6.6 7.7 7.6 Q6.7 8.4 6.7 10" fill="none" stroke="#fff" stroke-width="1.7"/><circle cx="6.7" cy="12.6" r="1.15" fill="#fff"/></svg>
<svg style="left:26px;top:72px" width="16" height="15" viewBox="0 0 16 15" ><path d="M0.4 7.4 L7.8 0.5 L7.8 4.2 L15.4 4.2 L15.4 10.8 L7.8 10.8 L7.8 14.4Z" fill="url(#gBack)" stroke="#1b79c8" stroke-width="0.9" stroke-linejoin="round"/><path d="M2.2 7.2 L7 2.8 L7 5.2 L14.4 5.2" fill="none" stroke="#a8defa" stroke-width="0.8"/></svg>
<svg style="left:49px;top:72px" width="16" height="15" viewBox="0 0 16 15" ><path d="M15.6 7.4 L8.2 0.5 L8.2 4.2 L0.6 4.2 L0.6 10.8 L8.2 10.8 L8.2 14.4Z" fill="url(#gFwd)" stroke="#5a5a5a" stroke-width="0.9" stroke-linejoin="round"/></svg>
<div style="left:71px;top:70px;width:1px;height:18px;background:#8d8d8d;"></div>
<svg style="left:81px;top:73px" width="15" height="14" viewBox="0 0 15 14" overflow="visible"><path d="M0.6 2.6 L5.6 2.6 L6.6 1.6 L13.6 1.6 L13.6 12.8 L0.6 12.8Z" fill="url(#gFolder)" stroke="#c9a24a" stroke-width="0.8"/><rect x="9.6" y="2.4" width="2.6" height="1" fill="#6fa0e8"/><path d="M0.8 5 L13.4 5" stroke="#f6dc94" stroke-width="0.8"/><path d="M2.2 9.2 Q5.6 7.6 5.8 3.6 L4 3.6 L6.6 -0.2 L9.4 3.6 L7.6 3.6 Q7.6 8.4 3 10.2Z" fill="#3fc43a" stroke="#2a9a28" stroke-width="0.4"/></svg>
<div style="left:100px;top:68px;width:23px;height:21px;background:#cce8ff;box-sizing:border-box;border:1px solid #99d1ff;"></div>
<svg style="left:104px;top:74px" width="16" height="13" viewBox="0 0 16 13" ><rect x="0.5" y="0.5" width="15" height="12" fill="#fff" stroke="#7e7e7e" stroke-width="1"/><rect x="1" y="1" width="14" height="1.8" fill="#d9dce2"/><rect x="11.6" y="1.2" width="1" height="1" fill="#fff"/><rect x="13.4" y="1.2" width="1" height="1" fill="#fff"/><rect x="1" y="2.8" width="14" height="0.9" fill="#8a8a8a"/><rect x="1" y="3.7" width="14" height="1" fill="#e6e6e6"/><rect x="5.2" y="4.7" width="0.9" height="7.3" fill="#8a8a8a"/><g fill="#3a7ad6"><rect x="2" y="5.8" width="2.2" height="1"/><rect x="2" y="7.9" width="2.2" height="1"/><rect x="2" y="10" width="2.2" height="1"/></g><rect x="6.2" y="4.8" width="8.6" height="7.2" fill="#f4f4f4"/><path d="M11 5.6 L11 11.2 L7.8 8.4Z" fill="#3fbf2e" stroke="#2c9a20" stroke-width="0.4"/></svg>
<div style="left:125px;top:70px;width:1px;height:18px;background:#8d8d8d;"></div>
<svg style="left:135px;top:71px" width="13" height="16" viewBox="0 0 13 16" ><rect x="0" y="0" width="13" height="16" fill="url(#gHelp)" stroke="#1a2470" stroke-width="0.6"/><path d="M3.9 5.2 Q3.9 2.4 6.5 2.4 Q9.3 2.4 9.3 5 Q9.3 6.6 7.7 7.6 Q6.7 8.4 6.7 10" fill="none" stroke="#fff" stroke-width="1.7"/><circle cx="6.7" cy="12.6" r="1.15" fill="#fff"/></svg>
<div style="left:154px;top:68px;width:23px;height:21px;background:#cce8ff;box-sizing:border-box;border:1px solid #99d1ff;"></div>
<svg style="left:158px;top:74px" width="16" height="13" viewBox="0 0 16 13" ><rect x="0.5" y="0.5" width="15" height="12" fill="#fff" stroke="#7e7e7e" stroke-width="1"/><rect x="1" y="1" width="14" height="1.8" fill="#d9dce2"/><rect x="11.6" y="1.2" width="1" height="1" fill="#fff"/><rect x="13.4" y="1.2" width="1" height="1" fill="#fff"/><rect x="1" y="2.8" width="14" height="0.9" fill="#8a8a8a"/><rect x="1" y="3.7" width="14" height="1" fill="#e6e6e6"/><rect x="10" y="4.7" width="0.9" height="7.3" fill="#8a8a8a"/><g fill="#3a7ad6"><rect x="11.8" y="5.8" width="2.2" height="1"/><rect x="11.8" y="7.9" width="2.2" height="1"/><rect x="11.8" y="10" width="2.2" height="1"/></g><rect x="1.2" y="4.8" width="8.6" height="7.2" fill="#f4f4f4"/><path d="M4.2 5.6 L4.2 11.2 L7.4 8.4Z" fill="#3fbf2e" stroke="#2c9a20" stroke-width="0.4"/></svg>
<svg style="left:0;top:728px" width="1366" height="40" viewBox="0 728 1366 40"><g fill="#fff"><polygon points="16,742.2 22.3,741.3 22.3,747.5 16,747.5"/><polygon points="23.2,741.2 32.2,739.9 32.2,747.5 23.2,747.5"/><polygon points="16,748.4 22.3,748.4 22.3,754.7 16,753.8"/><polygon points="23.2,748.4 32.2,748.4 32.2,756.1 23.2,754.8"/></g><circle cx="74.5" cy="745.6" r="5.1" fill="none" stroke="#fff" stroke-width="1.3"/><line x1="70.8" y1="749.6" x2="64.2" y2="755.6" stroke="#fff" stroke-width="1.5"/><g fill="none" stroke="#fff" stroke-width="1.2"><rect x="114.4" y="741.5" width="11" height="12.6"/><polyline points="112.6,743.2 110.6,743.2 110.6,752.4 112.6,752.4"/><polyline points="127.2,743.2 129.3,743.2 129.3,752.4 127.2,752.4"/></g><path d="M161.2 748.6 C161.2 742.4 165.6 737.2 172.4 737.2 C178.2 737.2 181.4 741.6 181.4 747 L181.4 749.6 L167.8 749.6 C168 752.8 170.6 754.6 174 754.6 C176.4 754.6 178.6 753.8 180.4 752.8 L180.4 757 C178.4 758 176 758.6 173.2 758.6 C166.6 758.6 163 754.4 163 748.8 C163 747.4 163.3 746 163.8 744.8 C162.6 745.8 161.8 747 161.2 748.6 Z M167.9 745.6 L176 745.6 C176 742.8 174.6 741.2 172.2 741.2 C169.8 741.2 168.2 743 167.9 745.6Z" fill="#1382d8"/><path d="M163.6 746.2 C164.6 743.6 166.2 741.8 168.6 740.6" fill="none" stroke="#03070e" stroke-width="0.9"/><path d="M209.6 739 L218 739 L218 757 L211.4 758.6 L209.6 757Z" fill="#e8b84a"/><path d="M211.6 740.2 L221.8 739 L223 740 L223 756 L211.6 758.6Z" fill="#f8dc82"/><path d="M211.6 740.2 L211.6 758.6" stroke="#d6a63a" stroke-width="0.6"/><path d="M376.4 742.6 C376.4 737.8 383.6 736 384.6 741.4" fill="none" stroke="#fff" stroke-width="1.1"/><polygon points="370.2,743.6 391,741 391,759 370.2,756.4" fill="#fff"/><g fill="#03070e"><polygon points="374,747 379.2,746.4 379.2,750 374,750"/><polygon points="380.2,746.3 386.8,745.6 386.8,750 380.2,750"/><polygon points="374,751 379.2,751 379.2,754.6 374,754"/><polygon points="380.2,751 386.8,751 386.8,755.4 380.2,754.7"/></g><polygon points="416.4,740 430,737 430,759 416.4,756" fill="#0f6fc6"/><rect x="430" y="741.4" width="9" height="13.2" fill="#1a86dc"/><path d="M430.6 742.4 L434.6 746.8 L438.6 742.4Z" fill="#fff"/><path d="M430.6 743.4 L430.6 753.8 L438.6 753.8 L438.6 743.4 L434.6 747.8Z" fill="#fff" opacity="0.95"/><ellipse cx="423.2" cy="748" rx="3" ry="3.8" fill="none" stroke="#fff" stroke-width="1.6"/><defs><linearGradient id="gRain" x1="0" y1="0" x2="1" y2="1"><stop offset="0" stop-color="#f01e1e"/><stop offset="0.22" stop-color="#f8a01e"/><stop offset="0.4" stop-color="#e8e428"/><stop offset="0.58" stop-color="#38c838"/><stop offset="0.78" stop-color="#1e8ee0"/><stop offset="1" stop-color="#1a32c8"/></linearGradient></defs><rect x="578" y="738" width="22" height="20" fill="url(#gRain)"/><g><polygon points="744,737 761,739.4 759.4,752.6 743.6,750" fill="#e8e6d8" stroke="#a8a89a" stroke-width="0.6"/><polygon points="746,739 759.4,741 758.2,750.6 745.6,748.6" fill="url(#gScreen)"/><rect x="738.4" y="741" width="3.6" height="9" fill="#b9c2c8"/><polygon points="737.4,749.6 750,748.4 757,752 757,757.6 744.6,758 737.4,756" fill="#aab6be" stroke="#74828c" stroke-width="0.5"/><polygon points="737.4,749.6 750,748.4 757,752 744.6,752.6" fill="#dbe2e6"/><rect x="745.6" y="753.6" width="4" height="1.6" fill="#e8eef2"/></g><polyline points="1148,751 1154,745 1160,751" fill="none" stroke="#fff" stroke-width="1.4"/><g fill="none" stroke="#fff" stroke-width="1.1"><rect x="1175.6" y="743.6" width="9.6" height="8.4"/><line x1="1186" y1="746" x2="1186" y2="750" stroke-width="1.4"/><rect x="1177" y="745" width="6.8" height="5.6" fill="#fff" stroke="none"/><path d="M1171.2 742.6 L1171.2 745 M1173.6 742.6 L1173.6 745 M1170.4 745.4 L1174.4 745.4 L1174.4 747.6 Q1172.4 749.4 1170.4 747.6Z M1172.4 749 L1172.4 752.6 L1175 752.6"/></g><g fill="none" stroke="#fff"><circle cx="1207.6" cy="754" r="1.3" fill="#fff" stroke="none"/><path d="M1203.6 754.6 A4.4 4.4 0 0 1 1208.4 749.8" stroke-width="1.3"/><path d="M1200.4 754.6 A7.6 7.6 0 0 1 1208.6 746.6" stroke-width="1.1" opacity="0.85"/><path d="M1197.4 754.6 A10.8 10.8 0 0 1 1208.8 743.4" stroke-width="1.1" opacity="0.7"/></g><g fill="none" stroke="#fff" stroke-width="1.1"><path d="M1218.4 745 L1221 745 L1224.4 741.4 L1224.4 754 L1221 750.6 L1218.4 750.6Z"/><path d="M1226.6 745.4 Q1228.4 747.8 1226.6 750.2"/><path d="M1229 743.2 Q1232 747.8 1229 752.4" opacity="0.6"/><path d="M1231.6 741.2 Q1235.6 747.8 1231.6 754.4" opacity="0.4"/></g><path d="M1325.4 740.6 L1340.6 740.6 L1340.6 752.2 L1335.6 752.2 L1333 755.4 L1330.4 752.2 L1325.4 752.2Z" fill="none" stroke="#fff" stroke-width="1.2"/><line x1="1361.5" y1="728" x2="1361.5" y2="768" stroke="#5a5f66" stroke-width="1"/></svg>
<svg style="left:236px;top:170px" width="32" height="32" viewBox="0 0 32 32" ><defs><linearGradient id="gBigC" x1="0" y1="0" x2="1" y2="1"><stop offset="0" stop-color="#c8d8ea"/><stop offset="0.35" stop-color="#eaf0f7"/><stop offset="0.5" stop-color="#c4d2e2"/><stop offset="0.75" stop-color="#fafcfe"/><stop offset="1" stop-color="#d6e0ec"/></linearGradient></defs><circle cx="16" cy="16" r="15.6" fill="#fdfdfd" stroke="#6e6e6e" stroke-width="0.8"/><circle cx="16" cy="16" r="14" fill="url(#gBigC)" stroke="#8c8c8c" stroke-width="0.8"/><path d="M16 16 L16 2.6 A13.4 13.4 0 0 1 29.4 16Z" fill="#ebcb7e"/><line x1="16.00" y1="5.00" x2="16.00" y2="3.60" stroke="#8aa4c4" stroke-width="0.7"/><line x1="21.50" y1="6.47" x2="22.20" y2="5.26" stroke="#8aa4c4" stroke-width="0.7"/><line x1="25.53" y1="10.50" x2="26.74" y2="9.80" stroke="#8aa4c4" stroke-width="0.7"/><line x1="27.00" y1="16.00" x2="28.40" y2="16.00" stroke="#8aa4c4" stroke-width="0.7"/><line x1="25.53" y1="21.50" x2="26.74" y2="22.20" stroke="#8aa4c4" stroke-width="0.7"/><line x1="21.50" y1="25.53" x2="22.20" y2="26.74" stroke="#8aa4c4" stroke-width="0.7"/><line x1="16.00" y1="27.00" x2="16.00" y2="28.40" stroke="#8aa4c4" stroke-width="0.7"/><line x1="10.50" y1="25.53" x2="9.80" y2="26.74" stroke="#8aa4c4" stroke-width="0.7"/><line x1="6.47" y1="21.50" x2="5.26" y2="22.20" stroke="#8aa4c4" stroke-width="0.7"/><line x1="5.00" y1="16.00" x2="3.60" y2="16.00" stroke="#8aa4c4" stroke-width="0.7"/><line x1="6.47" y1="10.50" x2="5.26" y2="9.80" stroke="#8aa4c4" stroke-width="0.7"/><line x1="10.50" y1="6.47" x2="9.80" y2="5.26" stroke="#8aa4c4" stroke-width="0.7"/><path d="M16 4.4 L16 19" stroke="#4a6890" stroke-width="1.5"/><path d="M13.2 16 L25.4 16" stroke="#4a6890" stroke-width="1.3"/></svg>
<svg style="left:795.5px;top:129px" width="12" height="12" viewBox="-6 -6 12 12" ><path d="M-3 1.6 L0 -1.4 L3 1.6" fill="none" stroke="#5c5c5c" stroke-width="2.1"/></svg>
<svg style="left:795.5px;top:638.5px" width="12" height="12" viewBox="-6 -6 12 12" ><path d="M-3 -1.6 L0 1.4 L3 -1.6" fill="none" stroke="#5c5c5c" stroke-width="2.1"/></svg>
<svg style="left:768.5px;top:163px" width="12" height="12" viewBox="-6 -6 12 12" ><path d="M-3 1.6 L0 -1.4 L3 1.6" fill="none" stroke="#5c5c5c" stroke-width="2.1"/></svg>
<svg style="left:768.5px;top:255px" width="12" height="12" viewBox="-6 -6 12 12" ><path d="M-3 -1.6 L0 1.4 L3 -1.6" fill="none" stroke="#5c5c5c" stroke-width="2.1"/></svg>
<svg style="left:242.5px;top:522.6px" width="12" height="12" viewBox="-6 -6 12 12" ><path d="M1.6 -3 L-1.4 0 L1.6 3" fill="none" stroke="#5c5c5c" stroke-width="2.1"/></svg>
<svg style="left:764px;top:522.6px" width="12" height="12" viewBox="-6 -6 12 12" ><path d="M-1.6 -3 L1.4 0 L-1.6 3" fill="none" stroke="#5c5c5c" stroke-width="2.1"/></svg>
<svg style="left:25px;top:680.6px" width="12" height="12" viewBox="-6 -6 12 12" ><path d="M1.6 -3 L-1.4 0 L1.6 3" fill="none" stroke="#5c5c5c" stroke-width="2.1"/></svg>
<svg style="left:194.6px;top:680.6px" width="12" height="12" viewBox="-6 -6 12 12" ><path d="M-1.6 -3 L1.4 0 L-1.6 3" fill="none" stroke="#5c5c5c" stroke-width="2.1"/></svg>
</body></html>
